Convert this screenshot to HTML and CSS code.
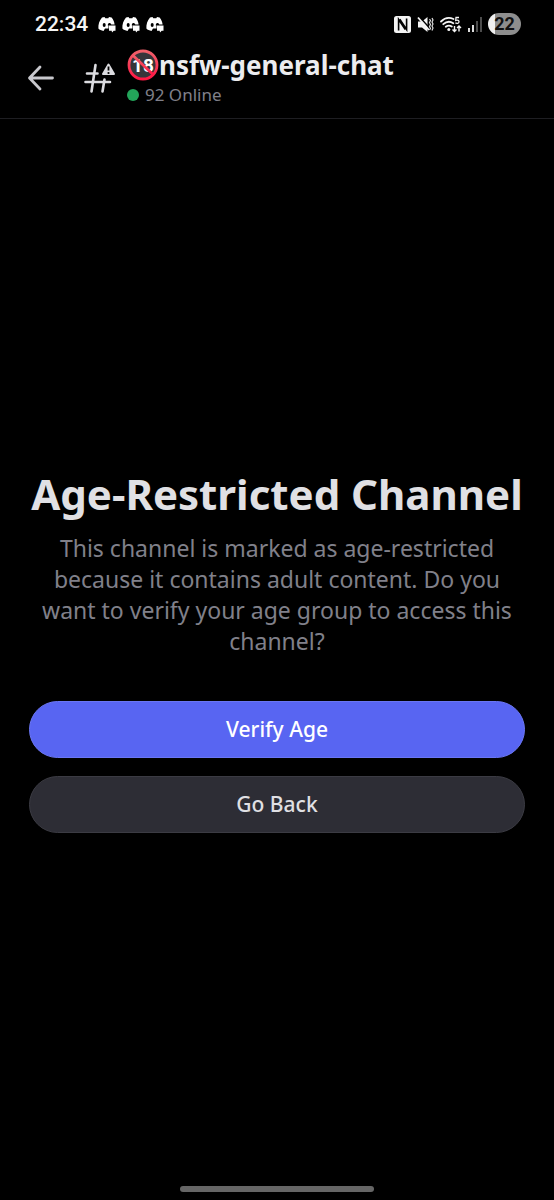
FILE: index.html
```html
<!DOCTYPE html>
<html lang="en">
<head>
<meta charset="utf-8">
<meta name="viewport" content="width=device-width, initial-scale=1">
<title>nsfw-general-chat</title>
<link rel="stylesheet" href="styles.css">
</head>
<body>
<svg width="0" height="0" class="defs" aria-hidden="true">
  <symbol id="discord" viewBox="0 0 18 17">
    <path fill="#fff" d="M4 1.500 6.500 1 7.300 2.200h3L11 1l2.600.6C15.200 3.500 16.300 6 16.600 8.500H10.500V12.500H7L5.500 15C3.500 14.600 1.500 13.800.4 12.500.1 8.300 1.400 4.500 4 1.500Z"/>
    <ellipse cx="6.200" cy="9" rx="1.500" ry="1.900" fill="#000"/>
    <path fill="#000" d="M9.800 9.500c-.2-3 3-3.300 3.500-.5Z"/>
    <path fill="#fff" d="M11 9.500h6.500v5.200h-1.800L14 16.500l-.3-1.800H11Z"/>
  </symbol>
</svg>
<div class="screen">
  <div class="status">
    <div class="status-left">
      <span class="clock">22:34</span>
      <svg class="notif" aria-hidden="true"><use href="#discord"/></svg>
      <svg class="notif" aria-hidden="true"><use href="#discord"/></svg>
      <svg class="notif" aria-hidden="true"><use href="#discord"/></svg>
    </div>
    <div class="status-right">
      <svg width="17" height="17" viewBox="0 0 17 17" aria-hidden="true">
        <rect width="17" height="17" rx="2.500" fill="#f4f4f4"/>
        <path d="M4.600 14.500V3.500L11.300 13.500M5.800 3.200 12.600 13.500V2.500" fill="none" stroke="#000" stroke-width="1.600"/>
      </svg>
      <svg width="17" height="17" viewBox="0 0 17 17" aria-hidden="true">
        <path d="M1 5.500h4L10.500 1v15L5 11.500H1Z" fill="#f4f4f4"/>
        <path d="M2.500 1 12.500 12" stroke="#000" stroke-width="1.600"/>
        <path d="M1 1.500 12 14" stroke="#f4f4f4" stroke-width="1.800"/>
        <path d="M12.500 3l1 1.500-1 2 1 2-1 2 1 2-1 1.500M15 2l1 2-1 2 1 2-1 2 1 2-1 2.500" stroke="#ddd" stroke-width="1.200" fill="none"/>
      </svg>
      <svg width="22" height="17" viewBox="0 0 22 17" aria-hidden="true">
        <g fill="none" stroke="#f4f4f4" stroke-width="1.800" stroke-linecap="round">
          <path d="M1 5.500C4.500 2 9.500 1.300 13.500 3M3.300 8.200c3-2.700 7-3 10-1M5.800 10.800c2-1.500 4-1.500 6-.3"/>
        </g>
        <circle cx="8.800" cy="13.500" r="1.500" fill="#f4f4f4"/>
        <path d="M19 1.500h-3l-.3 3c2-.7 3.500 0 3.300 1.500-.2 1.600-2.400 1.800-3.600.8" fill="none" stroke="#f4f4f4" stroke-width="1.300"/>
        <path d="M14.500 10v5.500m-2-2 2 2 2-2M19 15.500V10m-2 2 2-2 2 2" fill="none" stroke="#f4f4f4" stroke-width="1.400"/>
      </svg>
      <svg width="14" height="16" viewBox="0 0 14 16" aria-hidden="true">
        <path d="M1 12v4M5 9v7" stroke="#f4f4f4" stroke-width="1.800"/>
        <path d="M9 5v11M13 1v15" stroke="#555" stroke-width="1.800"/>
      </svg>
      <span class="battery">22</span>
    </div>
  </div>
  <header class="header">
    <button class="back" type="button" aria-label="Back">
      <svg width="28" height="28" viewBox="0 0 28 28" aria-hidden="true">
        <path d="M25.500 14H3M13 3 2.500 14 13 25" fill="none" stroke="#c8c8cd" stroke-width="2.800" stroke-linecap="round" stroke-linejoin="round"/>
      </svg>
    </button>
    <svg class="hash" width="32" height="32" viewBox="0 0 32 32" aria-hidden="true">
      <g fill="none" stroke="#dcdce0" stroke-width="2.600" stroke-linecap="round">
        <path d="M12.500 3 8.500 29.500M21.500 17.500 19.500 29.500M4 11.500H14.500M2.500 20H27"/>
      </g>
      <path d="M25.500 2.500 31 12h-11Z" fill="#dcdce0" stroke="#dcdce0" stroke-width="2" stroke-linejoin="round"/>
      <path d="M25.500 4.500v4" stroke="#000" stroke-width="1.800"/>
      <circle cx="25.500" cy="11" r="1.100" fill="#000"/>
    </svg>
    <div class="channel">
      <h2 class="name">
        <svg width="32" height="32" viewBox="0 0 32 32" role="img" aria-label="No one under eighteen">
          <defs><linearGradient id="ring" x2="0" y2="1"><stop stop-color="#f0606a"/><stop offset="1" stop-color="#ff1744"/></linearGradient></defs>
          <circle cx="16" cy="16" r="13.500" fill="#35353a"/>
          <text x="16" y="22.500" text-anchor="middle" class="eighteen">18</text>
          <g fill="none" stroke="url(#ring)" stroke-width="2.800"><circle cx="16" cy="16" r="14"/><path d="m6 6.500 20 19"/></g>
        </svg><span>nsfw-general-chat</span>
      </h2>
      <p class="online"><span class="dot"></span>92 Online</p>
    </div>
  </header>
  <main class="main">
    <h1 class="title">Age-Restricted Channel</h1>
    <p class="text">This channel is marked as age-restricted because it contains adult content. Do you want to verify your age group to access this channel?</p>
    <div class="actions">
      <button type="button" class="btn primary">Verify Age</button>
      <button type="button" class="btn secondary">Go Back</button>
    </div>
  </main>
  <div class="home"></div>
</div>
</body>
</html>
```

FILE: styles.css
```css
* { box-sizing: border-box; }
body { margin: 0; background: #000; color: #e0e0e4; font-family: "Noto Sans", sans-serif; }
h1, h2, p { margin: 0; }
svg { flex: none; }
.defs { position: absolute; }
.screen { min-height: 100vh; display: flex; flex-direction: column; }
.status { display: flex; justify-content: space-between; align-items: center; height: 48px; padding: 0 33px 0 35px; }
.status-left { display: flex; align-items: center; gap: 6px; }
.clock { font: 500 21px/24px Roboto, sans-serif; color: #f4f4f4; margin-right: 4px; }
.notif { width: 18px; height: 17px; }
.status-right { display: flex; align-items: center; gap: 6px; }
.battery { width: 33px; height: 22px; border-radius: 11px; background: linear-gradient(90deg, #f0f0f0 22%, #8e8e8e 22%); color: #111; font: 700 18px/22px Roboto, sans-serif; text-align: center; }
.header { display: flex; align-items: center; height: 71px; padding: 0 27px 10px; border-bottom: 1px solid #1e1e22; }
.back { display: flex; width: 28px; padding: 0; border: 0; background: none; margin-right: 28px; cursor: pointer; }
.hash { margin-right: 12px; }
.channel { min-width: 0; }
.name { display: flex; align-items: center; font-size: 26px; line-height: 34px; font-weight: 700; color: #ececef; white-space: nowrap; }
.eighteen { font: 700 19px Roboto, sans-serif; fill: #fff; }
.online { display: flex; align-items: center; gap: 6px; font-size: 17px; line-height: 26px; color: #80808a; }
.dot { width: 12px; height: 12px; border-radius: 50%; background: #23a55a; }
.main { flex: 1; display: flex; flex-direction: column; justify-content: center; padding: 0 29px 4px; text-align: center; }
.title { font-size: 42px; line-height: 50px; font-weight: 700; white-space: nowrap; }
.text { margin-top: 14px; font-size: 23px; line-height: 31px; color: #80808a; }
.actions { display: flex; flex-direction: column; gap: 18px; margin-top: 44px; }
.btn { height: 57px; border-radius: 29px; border: 1px solid #6a76f4; font: 500 21px/28px "Noto Sans", sans-serif; cursor: pointer; }
.primary { background: #5865f2; color: #fff; }
.secondary { background: #2d2d35; border-color: #3b3b43; color: #e0e0e4; }
.home { width: 35%; height: 6px; margin: 0 auto 8px; border-radius: 3px; background: #666; }
```
